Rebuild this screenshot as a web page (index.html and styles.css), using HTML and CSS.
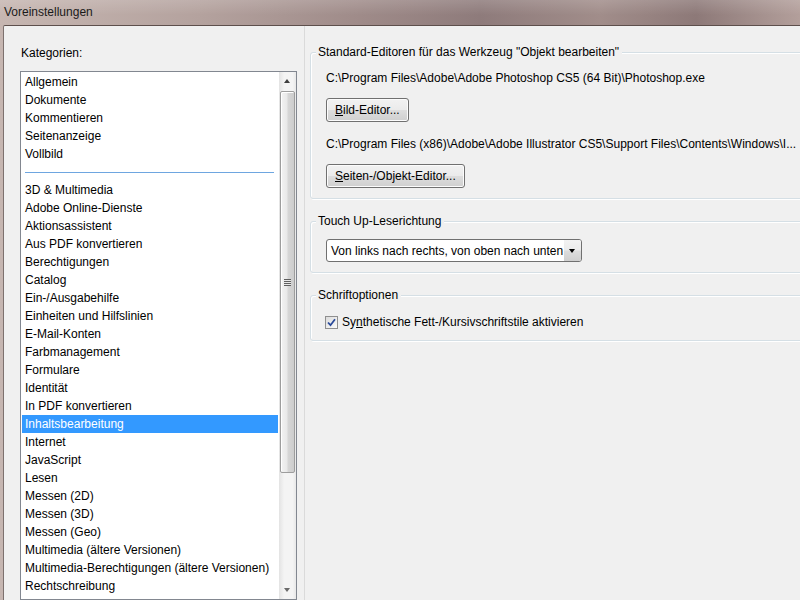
FILE: index.html
```html
<!DOCTYPE html>
<html lang="de">

<head>
    <meta charset="UTF-8">
    <title>Voreinstellungen</title>
    <link rel="stylesheet" href="styles.css">
</head>

<body>
    <div class="titlebar">Voreinstellungen</div>
    <div class="dialog">
        <!-- Linke Spalte: Kategorien -->
        <div class="left">
            <div class="caption">Kategorien:</div>
            <div class="listbox">
                <ul class="items">
                    <li>Allgemein</li>
                    <li>Dokumente</li>
                    <li>Kommentieren</li>
                    <li>Seitenanzeige</li>
                    <li>Vollbild</li>
                    <li class="separator"></li>
                    <li>3D &amp; Multimedia</li>
                    <li>Adobe Online-Dienste</li>
                    <li>Aktionsassistent</li>
                    <li>Aus PDF konvertieren</li>
                    <li>Berechtigungen</li>
                    <li>Catalog</li>
                    <li>Ein-/Ausgabehilfe</li>
                    <li>Einheiten und Hilfslinien</li>
                    <li>E-Mail-Konten</li>
                    <li>Farbmanagement</li>
                    <li>Formulare</li>
                    <li>Identität</li>
                    <li>In PDF konvertieren</li>
                    <li class="selected">Inhaltsbearbeitung</li>
                    <li>Internet</li>
                    <li>JavaScript</li>
                    <li>Lesen</li>
                    <li>Messen (2D)</li>
                    <li>Messen (3D)</li>
                    <li>Messen (Geo)</li>
                    <li>Multimedia (ältere Versionen)</li>
                    <li>Multimedia-Berechtigungen (ältere Versionen)</li>
                    <li>Rechtschreibung</li>
                </ul>
                <div class="scrollbar">
                    <div class="arrow up"></div>
                    <div class="track">
                        <div class="thumb"><span class="grip"></span></div>
                    </div>
                    <div class="arrow down"></div>
                </div>
            </div>
        </div>

        <!-- Rechte Spalte: Einstellungen -->
        <div class="right">
            <fieldset class="group">
                <legend>Standard-Editoren für das Werkzeug "Objekt bearbeiten"</legend>
                <div class="path">C:\Program Files\Adobe\Adobe Photoshop CS5 (64 Bit)\Photoshop.exe</div>
                <button class="btn"><u>B</u>ild-Editor...</button>
                <div class="path second">C:\Program Files (x86)\Adobe\Adobe Illustrator CS5\Support Files\Contents\Windows\I...</div>
                <button class="btn"><u>S</u>eiten-/Objekt-Editor...</button>
            </fieldset>

            <fieldset class="group">
                <legend>Touch Up-Leserichtung</legend>
                <div class="combo">
                    <span class="combo-text">Von links nach rechts, von oben nach unten</span>
                    <span class="combo-arrow"></span>
                </div>
            </fieldset>

            <fieldset class="group">
                <legend>Schriftoptionen</legend>
                <label class="check">
                    <span class="box">
                        <svg width="9" height="9" viewBox="0 0 9 9">
                            <path d="M1 4.5 L3.5 7.2 L8 1.2" fill="none" stroke="#2a4a9a" stroke-width="1.8" />
                        </svg>
                    </span>
                    Sy<u>n</u>thetische Fett-/Kursivschriftstile aktivieren
                </label>
            </fieldset>
        </div>
    </div>
</body>

</html>
```

FILE: styles.css
```css
html,
body {
    margin: 0;
    height: 100%;
    overflow: hidden;
}

body {
    font-family: "Liberation Sans", Arial, sans-serif;
    font-size: 12px;
    color: #000;
    background: linear-gradient(90deg, #c6b6b1 0%, #b4a29e 25%, #9f8b89 45%, #8e7b7b 60%, #a18d8a 75%, #8d7978 87%, #b39f9b 100%);
}

.titlebar {
    height: 25px;
    line-height: 24px;
    padding-left: 4px;
    color: #1a1a1a;
    font-size: 12px;
    background: linear-gradient(180deg, rgba(255, 255, 255, 0.15), rgba(255, 255, 255, 0) 60%);
}

.dialog {
    display: flex;
    margin-left: 3px;
    height: 575px;
    background: #f0f0f0;
    border-top: 1px solid #5d4f4c;
    border-left: 1px solid #7d716e;
    border-top-left-radius: 2px;
    box-sizing: border-box;
}

.left {
    width: 300px;
    padding-left: 16px;
    box-sizing: border-box;
    flex-shrink: 0;
}

.caption {
    margin-top: 19px;
    margin-left: 1px;
    line-height: 16px;
}

.listbox {
    display: flex;
    margin-top: 10px;
    width: 277px;
    height: 529px;
    border: 1px solid #828790;
    background: #fff;
    box-sizing: border-box;
}

.items {
    flex: 1;
    list-style: none;
    margin: 0;
    padding: 1px 1px 0;
    overflow: hidden;
}

.items li {
    height: 18px;
    line-height: 18px;
    padding-left: 3px;
    white-space: nowrap;
}

.items li.separator {
    position: relative;
}

.items li.separator::after {
    content: "";
    position: absolute;
    left: 3px;
    right: 4px;
    top: 9px;
    border-top: 1px solid #6ea6e0;
}

.items li.selected {
    background: #3399ff;
    color: #fff;
}

.scrollbar {
    width: 17px;
    display: flex;
    flex-direction: column;
    background: linear-gradient(90deg, #e3e3e3, #f4f4f4 30%, #f4f4f4 80%, #e8e8e8);
}

.arrow {
    height: 18px;
    position: relative;
}

.arrow::after {
    content: "";
    position: absolute;
    left: 5px;
    width: 0;
    height: 0;
    border-left: 3.5px solid transparent;
    border-right: 3.5px solid transparent;
}

.arrow.up::after {
    top: 7px;
    border-bottom: 4px solid #3f3f3f;
}

.arrow.down::after {
    top: 7px;
    border-top: 4px solid #6a6a6a;
}

.track {
    flex: 1;
    padding-top: 1px;
}

.thumb {
    height: 382px;
    margin: 0 1px;
    border: 1px solid #9d9d9d;
    border-radius: 2px;
    background: linear-gradient(90deg, #f3f3f3, #e9e9e9 45%, #d6d6d6 55%, #cdcdcd);
    box-shadow: inset 1px 1px 0 #fff;
    box-sizing: border-box;
    display: flex;
    align-items: center;
    justify-content: center;
}

.grip {
    width: 7px;
    height: 7px;
    background: repeating-linear-gradient(180deg, #5f5f5f 0 1px, #e8e8e8 1px 2px);
}

.right {
    flex: 1;
    padding-left: 5px;
    margin-right: -10px;
    border-left: 1px solid #dadada;
    padding-top: 18px;
}

.group {
    margin: 0 0 14px 0;
    padding: 0 0 10px 15px;
    border: 1px solid #d5dfe5;
    border-radius: 3px;
    box-shadow: inset 1px 1px 0 #fff, 1px 1px 0 #fff;
}

.group legend {
    margin-left: -10px;
    padding: 0 3px 0 2px;
    line-height: 16px;
    background: #f0f0f0;
}

.path {
    margin-top: 10px;
    line-height: 16px;
    white-space: nowrap;
}

.path.second {
    margin-top: 14px;
}

.btn {
    display: block;
    margin-top: 12px;
    height: 24px;
    padding: 0 8px;
    font-family: inherit;
    font-size: 12px;
    color: #000;
    border: 1px solid #707070;
    border-radius: 3px;
    background: linear-gradient(180deg, #f2f2f2 0%, #ebebeb 48%, #dddddd 52%, #cfcfcf 100%);
    box-shadow: inset 0 0 0 1px #fcfcfc;
}

.combo {
    display: flex;
    align-items: center;
    margin-top: 10px;
    width: 256px;
    height: 23px;
    border: 1px solid #707070;
    border-radius: 3px;
    background: #fff;
    box-sizing: border-box;
    overflow: hidden;
}

.combo-text {
    flex: 1;
    padding-left: 4px;
    white-space: nowrap;
}

.combo-arrow {
    width: 17px;
    height: 100%;
    position: relative;
    background: linear-gradient(180deg, #f2f2f2 0%, #ebebeb 48%, #dddddd 52%, #cfcfcf 100%);
}

.combo-arrow::after {
    content: "";
    position: absolute;
    left: 5px;
    top: 9px;
    border-left: 3.5px solid transparent;
    border-right: 3.5px solid transparent;
    border-top: 4px solid #000;
}

.check {
    display: flex;
    align-items: center;
    margin-top: 11px;
    margin-left: -1px;
    line-height: 16px;
}

.box {
    width: 13px;
    height: 13px;
    margin-right: 4px;
    border: 1px solid #8f8f8f;
    background: linear-gradient(135deg, #dcdcdc, #fbfbfb);
    box-sizing: border-box;
    display: flex;
    align-items: center;
    justify-content: center;
}
```
